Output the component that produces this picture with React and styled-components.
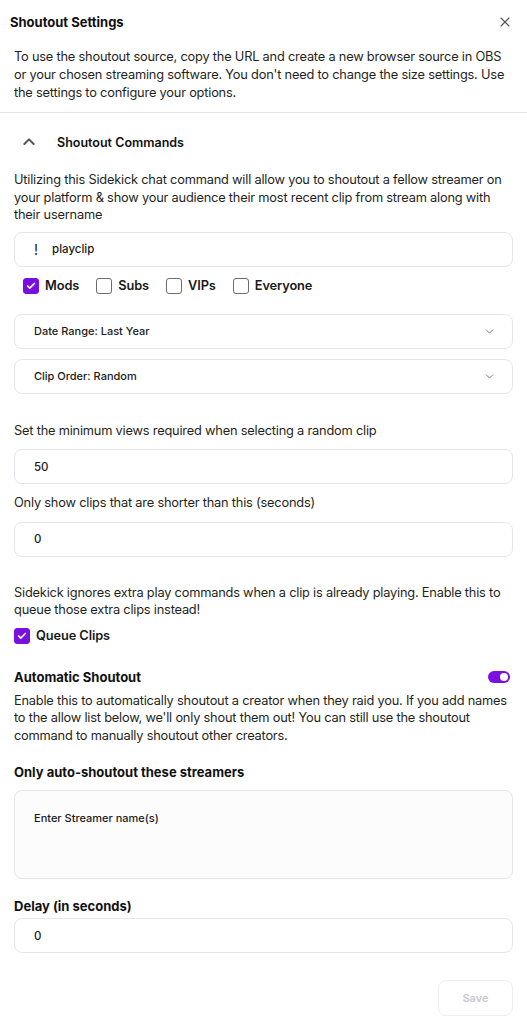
import React, { useState } from "react";
import styled, { createGlobalStyle } from "styled-components";

const GlobalStyle = createGlobalStyle`
  body {
    margin: 0;
    background: #ffffff;
    font-family: "Inter", "Noto Sans", sans-serif;
    color: #1c1c1f;
  }
  * { box-sizing: border-box; }
`;

const Panel = styled.div`
  width: 527px;
  min-height: 1024px;
  background: #fff;
  display: flex;
  flex-direction: column;
`;

const Header = styled.div`
  display: flex;
  align-items: center;
  justify-content: space-between;
  height: 44px;
  padding: 0 16px 0 10px;
`;

const Title = styled.h2`
  margin: 0;
  font-size: 13px;
  font-weight: 700;
  color: #111;
`;

const CloseButton = styled.button`
  border: none;
  background: none;
  padding: 0;
  display: flex;
  color: #555;
  cursor: pointer;
`;

const Intro = styled.p`
  margin: 0;
  padding: 4px 14px 10px;
  font-size: 12.8px;
  letter-spacing: -0.2px;
  line-height: 18px;
  color: #1f1f22;
  border-bottom: 1px solid #e6e4ee;
`;

const Body = styled.div`
  padding: 0 14px;
  display: flex;
  flex-direction: column;
`;

const AccordionHead = styled.button`
  display: flex;
  align-items: center;
  gap: 20px;
  border: none;
  background: none;
  padding: 0 0 0 7px;
  height: 58px;
  font-family: inherit;
  font-size: 12.5px;
  font-weight: 600;
  color: #111;
  cursor: pointer;
`;

const Text = styled.p`
  margin: ${(p) => p.$margin || "0"};
  font-size: 12.8px;
  letter-spacing: -0.2px;
  line-height: 17.5px;
  color: #1f1f22;
`;

const Field = styled.div`
  height: 35px;
  border: 1px solid #e6e5ee;
  border-radius: 8px;
  display: flex;
  align-items: center;
  padding: 0 16px 0 19px;
  margin: ${(p) => p.$margin || "0"};
  font-size: 11.5px;
  font-weight: 500;
  color: #1a1a1a;
  gap: 14px;
`;

const Prefix = styled.span`
  font-size: 14px;
  font-weight: 400;
  color: #222;
`;

const SelectBox = styled(Field)`
  justify-content: space-between;
  font-size: 11px;
`;

const CheckRow = styled.div`
  display: flex;
  align-items: center;
  gap: 17px;
  padding: ${(p) => p.$pad || "0"};
  margin: ${(p) => p.$margin || "0"};
`;

const CheckLabel = styled.label`
  display: flex;
  align-items: center;
  gap: 6px;
  font-size: 12.8px;
  letter-spacing: -0.1px;
  font-weight: 600;
  color: #1a1a1a;
  cursor: pointer;
`;

const Box = styled.span`
  width: 16px;
  height: 16px;
  border-radius: 3px;
  display: flex;
  align-items: center;
  justify-content: center;
  background: ${(p) => (p.$on ? "#7a0fe0" : "#fff")};
  border: 1.5px solid ${(p) => (p.$on ? "#7a0fe0" : "#6b6b70")};
`;

const SectionRow = styled.div`
  display: flex;
  align-items: center;
  justify-content: space-between;
  margin: ${(p) => p.$margin || "0"};
`;

const Heading = styled.h3`
  margin: ${(p) => p.$margin || "0"};
  font-size: 13px;
  font-weight: 700;
  color: #111;
`;

const Toggle = styled.span`
  width: 22px;
  height: 12px;
  border-radius: 6px;
  background: #7a0fe0;
  display: flex;
  align-items: center;
  justify-content: flex-end;
  padding: 0 2px;
  margin-right: 3px;
  &::after {
    content: "";
    width: 8px;
    height: 8px;
    border-radius: 50%;
    background: #fff;
  }
`;

const TextArea = styled.div`
  height: 89px;
  border: 1px solid #e6e5ee;
  border-radius: 8px;
  background: #fcfcfd;
  padding: 20px 19px;
  font-size: 11px;
  font-weight: 500;
  color: #1a1a1a;
  margin: ${(p) => p.$margin || "0"};
`;

const Footer = styled.div`
  display: flex;
  justify-content: flex-end;
  padding: 27px 14px 10px;
`;

const SaveButton = styled.button`
  width: 75px;
  height: 36px;
  border: 1px solid #eeedf2;
  border-radius: 8px;
  background: #fff;
  color: #c9c9cf;
  font-family: inherit;
  font-size: 11px;
  font-weight: 600;
`;

const Check = () => (
  <svg width="10" height="10" viewBox="0 0 24 24" fill="none" stroke="#fff" strokeWidth="4" strokeLinecap="round" strokeLinejoin="round">
    <polyline points="20 6 9 17 4 12" />
  </svg>
);

const Chevron = ({ up }) => (
  <svg width={up ? 16 : 13} height={up ? 16 : 13} viewBox="0 0 24 24" fill="none" stroke={up ? "#555" : "#7d7d84"} strokeWidth={up ? 3 : 1.8} strokeLinecap="round" strokeLinejoin="round">
    <polyline points={up ? "5 15 12 8 19 15" : "6 9 12 15 18 9"} />
  </svg>
);

function CheckItem({ label, on }) {
  return (
    <CheckLabel>
      <Box $on={on}>{on && <Check />}</Box>
      {label}
    </CheckLabel>
  );
}

export default function App() {
  const [roles] = useState({ Mods: true, Subs: false, VIPs: false, Everyone: false });
  return (
    <>
      <GlobalStyle />
      <Panel>
        <Header>
          <Title>Shoutout Settings</Title>
          <CloseButton>
            <svg width="12" height="12" viewBox="0 0 24 24" fill="none" stroke="#555" strokeWidth="2.2" strokeLinecap="round">
              <line x1="4" y1="4" x2="20" y2="20" />
              <line x1="20" y1="4" x2="4" y2="20" />
            </svg>
          </CloseButton>
        </Header>
        <Intro>
          To use the shoutout source, copy the URL and create a new browser source in OBS or your chosen
          streaming software. You don't need to change the size settings. Use the settings to configure your
          options.
        </Intro>
        <Body>
          <AccordionHead>
            <Chevron up />
            Shoutout Commands
          </AccordionHead>
          <Text>
            Utilizing this Sidekick chat command will allow you to shoutout a fellow streamer on your platform &amp;
            show your audience their most recent clip from stream along with their username
          </Text>
          <Field $margin="8px 0 0">
            <Prefix>!</Prefix>
            playclip
          </Field>
          <CheckRow $pad="0 0 0 9px" $margin="11px 0 0">
            {Object.entries(roles).map(([k, v]) => (
              <CheckItem key={k} label={k} on={v} />
            ))}
          </CheckRow>
          <SelectBox $margin="20px 0 0">
            Date Range: Last Year
            <Chevron />
          </SelectBox>
          <SelectBox $margin="10px 0 0">
            Clip Order: Random
            <Chevron />
          </SelectBox>
          <Text $margin="28px 0 0">Set the minimum views required when selecting a random clip</Text>
          <Field $margin="10px 0 0">50</Field>
          <Text $margin="10px 0 0">Only show clips that are shorter than this (seconds)</Text>
          <Field $margin="10px 0 0">0</Field>
          <Text $margin="27px 0 0">
            Sidekick ignores extra play commands when a clip is already playing. Enable this to queue those extra
            clips instead!
          </Text>
          <CheckRow $margin="9px 0 0">
            <CheckItem label="Queue Clips" on />
          </CheckRow>
          <SectionRow $margin="25px 0 0">
            <Heading>Automatic Shoutout</Heading>
            <Toggle />
          </SectionRow>
          <Text $margin="7px 0 0">
            Enable this to automatically shoutout a creator when they raid you. If you add names to the allow list
            below, we'll only shout them out! You can still use the shoutout command to manually shoutout other
            creators.
          </Text>
          <Heading $margin="20px 0 0">Only auto-shoutout these streamers</Heading>
          <TextArea $margin="10px 0 0">Enter Streamer name(s)</TextArea>
          <Heading $margin="19px 0 0">Delay (in seconds)</Heading>
          <Field $margin="4px 0 0">0</Field>
        </Body>
        <Footer>
          <SaveButton>Save</SaveButton>
        </Footer>
      </Panel>
    </>
  );
}
